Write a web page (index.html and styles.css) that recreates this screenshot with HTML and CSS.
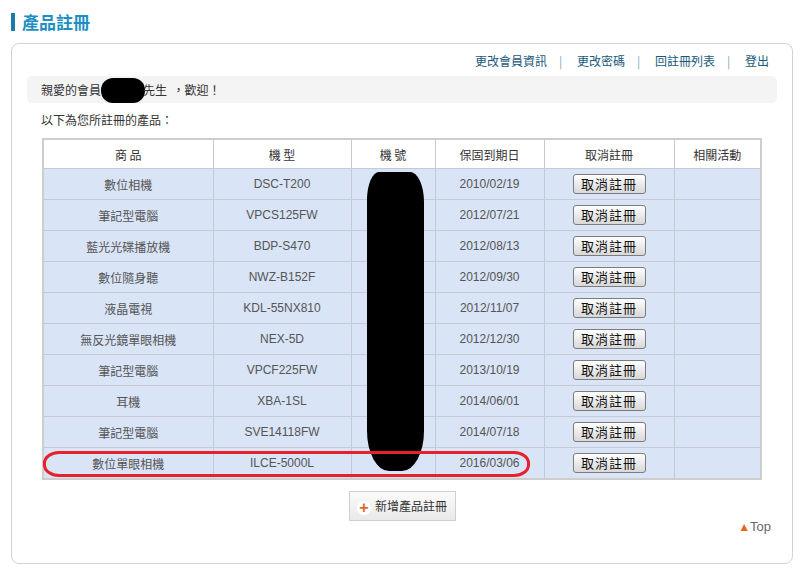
FILE: index.html
```html
<!DOCTYPE html>
<html lang="zh-Hant">
<head>
    <meta charset="UTF-8">
    <meta name="viewport" content="width=device-width, initial-scale=1.0">
    <title>產品註冊</title>
    <link rel="stylesheet" href="styles.css">
</head>
<body>
    <div class="page">
        <h1 class="page-title">產品註冊</h1>

        <div class="panel">
            <div class="member-links">
                <a href="#">更改會員資訊</a><span class="sep">|</span>
                <a href="#">更改密碼</a><span class="sep">|</span>
                <a href="#">回註冊列表</a><span class="sep">|</span>
                <a href="#">登出</a>
            </div>

            <div class="welcome">親愛的會員<span class="redact-name"></span>先生 &nbsp;，歡迎！</div>

            <p class="intro">以下為您所註冊的產品：</p>

            <div class="table-wrap">
                <table class="product-table">
                    <colgroup>
                        <col style="width: 170px">
                        <col style="width: 138px">
                        <col style="width: 84px">
                        <col style="width: 109px">
                        <col style="width: 130px">
                        <col style="width: 87px">
                    </colgroup>
                    <thead>
                        <tr>
                            <th>商 品</th>
                            <th>機 型</th>
                            <th>機 號</th>
                            <th>保固到期日</th>
                            <th>取消註冊</th>
                            <th>相關活動</th>
                        </tr>
                    </thead>
                    <tbody>
                        <tr><td>數位相機</td><td>DSC-T200</td><td></td><td>2010/02/19</td><td><button class="cancel-btn">取消註冊</button></td><td></td></tr>
                        <tr><td>筆記型電腦</td><td>VPCS125FW</td><td></td><td>2012/07/21</td><td><button class="cancel-btn">取消註冊</button></td><td></td></tr>
                        <tr><td>藍光光碟播放機</td><td>BDP-S470</td><td></td><td>2012/08/13</td><td><button class="cancel-btn">取消註冊</button></td><td></td></tr>
                        <tr><td>數位隨身聽</td><td>NWZ-B152F</td><td></td><td>2012/09/30</td><td><button class="cancel-btn">取消註冊</button></td><td></td></tr>
                        <tr><td>液晶電視</td><td>KDL-55NX810</td><td></td><td>2012/11/07</td><td><button class="cancel-btn">取消註冊</button></td><td></td></tr>
                        <tr><td>無反光鏡單眼相機</td><td>NEX-5D</td><td></td><td>2012/12/30</td><td><button class="cancel-btn">取消註冊</button></td><td></td></tr>
                        <tr><td>筆記型電腦</td><td>VPCF225FW</td><td></td><td>2013/10/19</td><td><button class="cancel-btn">取消註冊</button></td><td></td></tr>
                        <tr><td>耳機</td><td>XBA-1SL</td><td></td><td>2014/06/01</td><td><button class="cancel-btn">取消註冊</button></td><td></td></tr>
                        <tr><td>筆記型電腦</td><td>SVE14118FW</td><td></td><td>2014/07/18</td><td><button class="cancel-btn">取消註冊</button></td><td></td></tr>
                        <tr><td>數位單眼相機</td><td>ILCE-5000L</td><td></td><td>2016/03/06</td><td><button class="cancel-btn">取消註冊</button></td><td></td></tr>
                    </tbody>
                </table>
                <!-- redaction + highlight drawn over the table -->
                <div class="redact-serial"></div>
                <div class="highlight"></div>
            </div>

            <div class="add-row">
                <a href="#" class="add-btn"><span class="plus">+</span>新增產品註冊</a>
            </div>

            <div class="to-top"><a href="#"><span class="arrow">▲</span>Top</a></div>
        </div>
    </div>
</body>
</html>
```

FILE: styles.css
```css
body {
    margin: 0;
    background-color: #fff;
    font-family: "Liberation Sans", Arial, "Noto Sans CJK TC", sans-serif;
    font-size: 12px;
    color: #333;
}

.page {
    padding: 13px 0 0 11px;
    width: 782px;
}

.page-title {
    margin: 0 0 12px 0;
    height: 18px;
    line-height: 18px;
    border-left: 4px solid #1a7ca6;
    padding-left: 7px;
    font-size: 17px;
    font-weight: bold;
    color: #1d8fc3;
    font-family: "Noto Sans CJK TC", sans-serif;
}

.panel {
    border: 1px solid #d2d2d2;
    border-radius: 8px;
    padding: 9px 15px 0 15px;
    box-sizing: border-box;
    height: 521px;
}

.member-links {
    text-align: right;
    height: 16px;
    line-height: 16px;
    padding-right: 8px;
    font-family: "Noto Sans CJK TC", sans-serif;
}

.member-links a {
    color: #1a5a7c;
    text-decoration: none;
}

.member-links .sep {
    color: #7fa4b8;
    margin: 0 12px;
}

.welcome {
    margin-top: 7px;
    height: 27px;
    line-height: 27px;
    background-color: #f4f4f4;
    border-radius: 5px;
    padding-left: 14px;
    font-family: "Noto Sans CJK TC", sans-serif;
}

.redact-name {
    display: inline-block;
    width: 44px;
    height: 25px;
    background-color: #000;
    border-radius: 12px;
    vertical-align: middle;
    margin: -2px -2px 0 0;
}

.intro {
    margin: 9px 0 0 14px;
    line-height: 16px;
    font-family: "Noto Sans CJK TC", sans-serif;
}

.table-wrap {
    position: relative;
    margin: 10px 0 0 15px;
    width: 720px;
}

.product-table {
    width: 718px;
    table-layout: fixed;
    border-collapse: collapse;
    border: 2px solid #cdcdcd;
    color: #555;
    font-size: 12px;
}

.product-table th,
.product-table td {
    border: 1px solid #c5cad2;
    text-align: center;
    padding: 0;
    font-weight: normal;
}

.product-table th {
    height: 28px;
    background-color: #fff;
    color: #333;
    font-family: "Noto Sans CJK TC", sans-serif;
}

.product-table td {
    height: 30px;
    background-color: #d9e4f7;
}

.product-table td:first-child {
    font-family: "Noto Sans CJK TC", sans-serif;
}

.cancel-btn {
    width: 73px;
    height: 20px;
    padding: 0;
    border: 1px solid #7c7c7c;
    border-radius: 3px;
    background: linear-gradient(#ffffff, #e9e9e9 55%, #d8d8d8);
    color: #111;
    font-family: "Noto Sans CJK TC", sans-serif;
    font-size: 13px;
    letter-spacing: 1px;
    line-height: 18px;
    cursor: pointer;
}

.redact-serial {
    position: absolute;
    left: 325px;
    top: 34px;
    width: 57px;
    height: 299px;
    background-color: #000;
    border-radius: 12px 14px 22px 22px / 28px 30px 40px 40px;
}

.highlight {
    position: absolute;
    left: 1px;
    top: 313px;
    width: 481px;
    height: 20px;
    border: 3px solid #e8202a;
    border-radius: 16px / 12px;
}

.add-row {
    text-align: center;
    margin-top: 11px;
}

.add-btn {
    display: inline-block;
    width: 107px;
    height: 30px;
    line-height: 28px;
    box-sizing: border-box;
    border: 1px solid #cfcfcf;
    background: linear-gradient(#fbfbfb, #e9e9e9);
    color: #333;
    text-decoration: none;
    font-family: "Noto Sans CJK TC", sans-serif;
    font-size: 12px;
}

.add-btn .plus {
    display: inline-block;
    width: 14px;
    height: 14px;
    line-height: 14px;
    margin-right: 4px;
    border-radius: 50%;
    background-color: #fff;
    color: #e5661e;
    font-family: "Liberation Sans", sans-serif;
    font-weight: bold;
    font-size: 16px;
    text-align: center;
    vertical-align: -2px;
}

.to-top {
    text-align: right;
    padding-right: 6px;
    margin-top: -2px;
    line-height: 16px;
    font-size: 13px;
}

.to-top a {
    color: #666;
    text-decoration: none;
}

.to-top .arrow {
    color: #e5661e;
    font-size: 12px;
    vertical-align: 0;
}
```
